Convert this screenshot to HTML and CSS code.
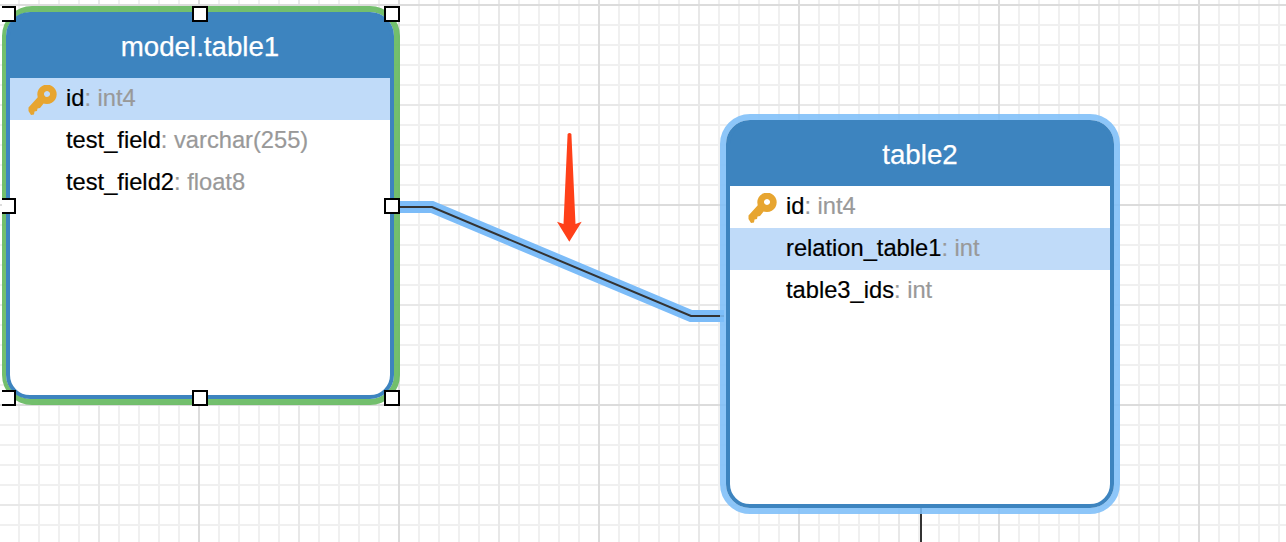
FILE: index.html
```html
<!DOCTYPE html>
<html lang="en">
<head>
<meta charset="utf-8">
<title>Schema diagram</title>
<link rel="stylesheet" href="styles.css">
</head>
<body>
<svg width="0" height="0" class="defs" aria-hidden="true">
  <symbol id="key" viewBox="0 0 30 30">
    <path fill="#e7a530" fill-rule="evenodd" d="M20 -0.4A9.7 9.7 0 1 1 19.99 -0.4ZM20 6A3 3 0 1 0 20.01 6Z"/>
    <path fill="#e7a530" d="M11 12L1.5 22.5L1.5 26L4 30L7 29.5L7.5 26.5L10 26L10.5 23.5L13 23L17 18Z"/>
  </symbol>
</svg>
<main class="canvas">
  <svg class="wires" width="1286" height="542" viewBox="0 0 1286 542" aria-hidden="true">
    <polyline class="wire-glow" points="396,207 432,207 691,316 724,316"/>
    <polyline class="wire-line" points="396,207 432,207 691,316 724,316"/>
    <line class="wire-line" x1="921" y1="508" x2="921" y2="542"/>
  </svg>

  <section class="node node-selected">
    <div class="node-inner">
      <h2 class="node-title">model.table1</h2>
      <div class="field field-active">
        <svg class="key"><use href="#key"/></svg>
        <span class="field-name">id</span><span class="field-type">: int4</span>
      </div>
      <div class="field">
        <span class="key"></span>
        <span class="field-name">test_field</span><span class="field-type">: varchar(255)</span>
      </div>
      <div class="field">
        <span class="key"></span>
        <span class="field-name">test_field2</span><span class="field-type">: float8</span>
      </div>
    </div>
  </section>

  <section class="node node-related">
    <div class="node-inner">
      <h2 class="node-title">table2</h2>
      <div class="field">
        <svg class="key"><use href="#key"/></svg>
        <span class="field-name">id</span><span class="field-type">: int4</span>
      </div>
      <div class="field field-active">
        <span class="key"></span>
        <span class="field-name">relation_table1</span><span class="field-type">: int</span>
      </div>
      <div class="field">
        <span class="key"></span>
        <span class="field-name">table3_ids</span><span class="field-type">: int</span>
      </div>
    </div>
  </section>

  <span class="handle handle-left h-top"></span>
  <span class="handle h-center h-top"></span>
  <span class="handle h-right h-top"></span>
  <span class="handle handle-left h-mid"></span>
  <span class="handle h-right h-mid"></span>
  <span class="handle handle-left h-bottom"></span>
  <span class="handle h-center h-bottom"></span>
  <span class="handle h-right h-bottom"></span>

  <svg class="arrow" width="28" height="112" viewBox="0 0 28 112" aria-hidden="true">
    <path fill="#ff4019" d="M12.6 2Q14.5 0 16.4 2L20.5 92L26.7 89.7L14.3 109.8L2 89.7L8.5 92Z"/>
  </svg>
</main>
</body>
</html>
```

FILE: styles.css
```css
* { box-sizing: border-box; }

html, body {
  margin: 0;
  padding: 0;
  background: #fff;
}

.defs { position: absolute; }

.canvas {
  position: relative;
  width: 1286px;
  height: 542px;
  overflow: hidden;
  font-family: "Liberation Sans", Arial, sans-serif;
  background-color: #fff;
  background-image:
    linear-gradient(to right, transparent 198px, #dcdcdc 198px),
    linear-gradient(to bottom, #dcdcdc 2px, transparent 2px),
    linear-gradient(to right, transparent 98px, #e8e8e8 98px),
    linear-gradient(to bottom, #e8e8e8 2px, transparent 2px),
    linear-gradient(to right, transparent 18px, #f0f0f0 18px),
    linear-gradient(to bottom, #f0f0f0 2px, transparent 2px);
  background-size: 200px 200px, 200px 200px, 100px 100px, 100px 100px, 20px 20px, 20px 20px;
  background-position: 0 0, 0 4px, 0 0, 0 4px, 0 0, 0 4px;
}

.wires, .arrow { position: absolute; }
.wires { left: 0; top: 0; }
.arrow { left: 555px; top: 132px; }

.wire-glow {
  fill: none;
  stroke: #7cbcf8;
  stroke-width: 12;
}

.wire-line {
  fill: none;
  stroke: #333;
  stroke-width: 2;
}

.node {
  position: absolute;
  width: 400px;
  height: 400px;
  border: 6px solid;
  border-radius: 30px;
  background-clip: padding-box;
}

.node-selected {
  left: 2px;
  top: 6px;
  width: 398px;
  height: 399px;
  border-left-width: 4px;
  border-color: rgba(104, 186, 98, .93);
}

.node-related {
  left: 720px;
  top: 114px;
  border-color: rgba(125, 190, 248, .88);
}

.node-inner {
  height: 100%;
  border: 4px solid #3d84bf;
  border-radius: 24px;
  background: linear-gradient(#3d84bf 62px, #fff 62px);
  overflow: hidden;
}

.node-title {
  margin: 0;
  height: 62px;
  display: flex;
  align-items: center;
  justify-content: center;
  color: #fff;
  font-size: 27.7px;
  font-weight: 400;
  -webkit-text-stroke: .25px #fff;
}

.field {
  display: flex;
  align-items: center;
  height: 42px;
  padding: 0 0 2px 17px;
  font-size: 23.7px;
  white-space: nowrap;
  -webkit-text-stroke: .2px;
}

.field-active { background: #c0dbf9; }

.key {
  display: block;
  flex: none;
  width: 30px;
  height: 30px;
  margin: 4px 9px 0 0;
}

.field-name { color: #000; }
.field-type { color: #999; }

.handle {
  position: absolute;
  width: 16px;
  height: 16px;
  border: 2px solid #000;
  background: #fff;
}

.handle-left { left: 2px; width: 14px; border-left: 0; }
.h-center { left: 192px; }
.h-right { left: 384px; }
.h-top { top: 6px; }
.h-mid { top: 198px; }
.h-bottom { top: 390px; }
```
